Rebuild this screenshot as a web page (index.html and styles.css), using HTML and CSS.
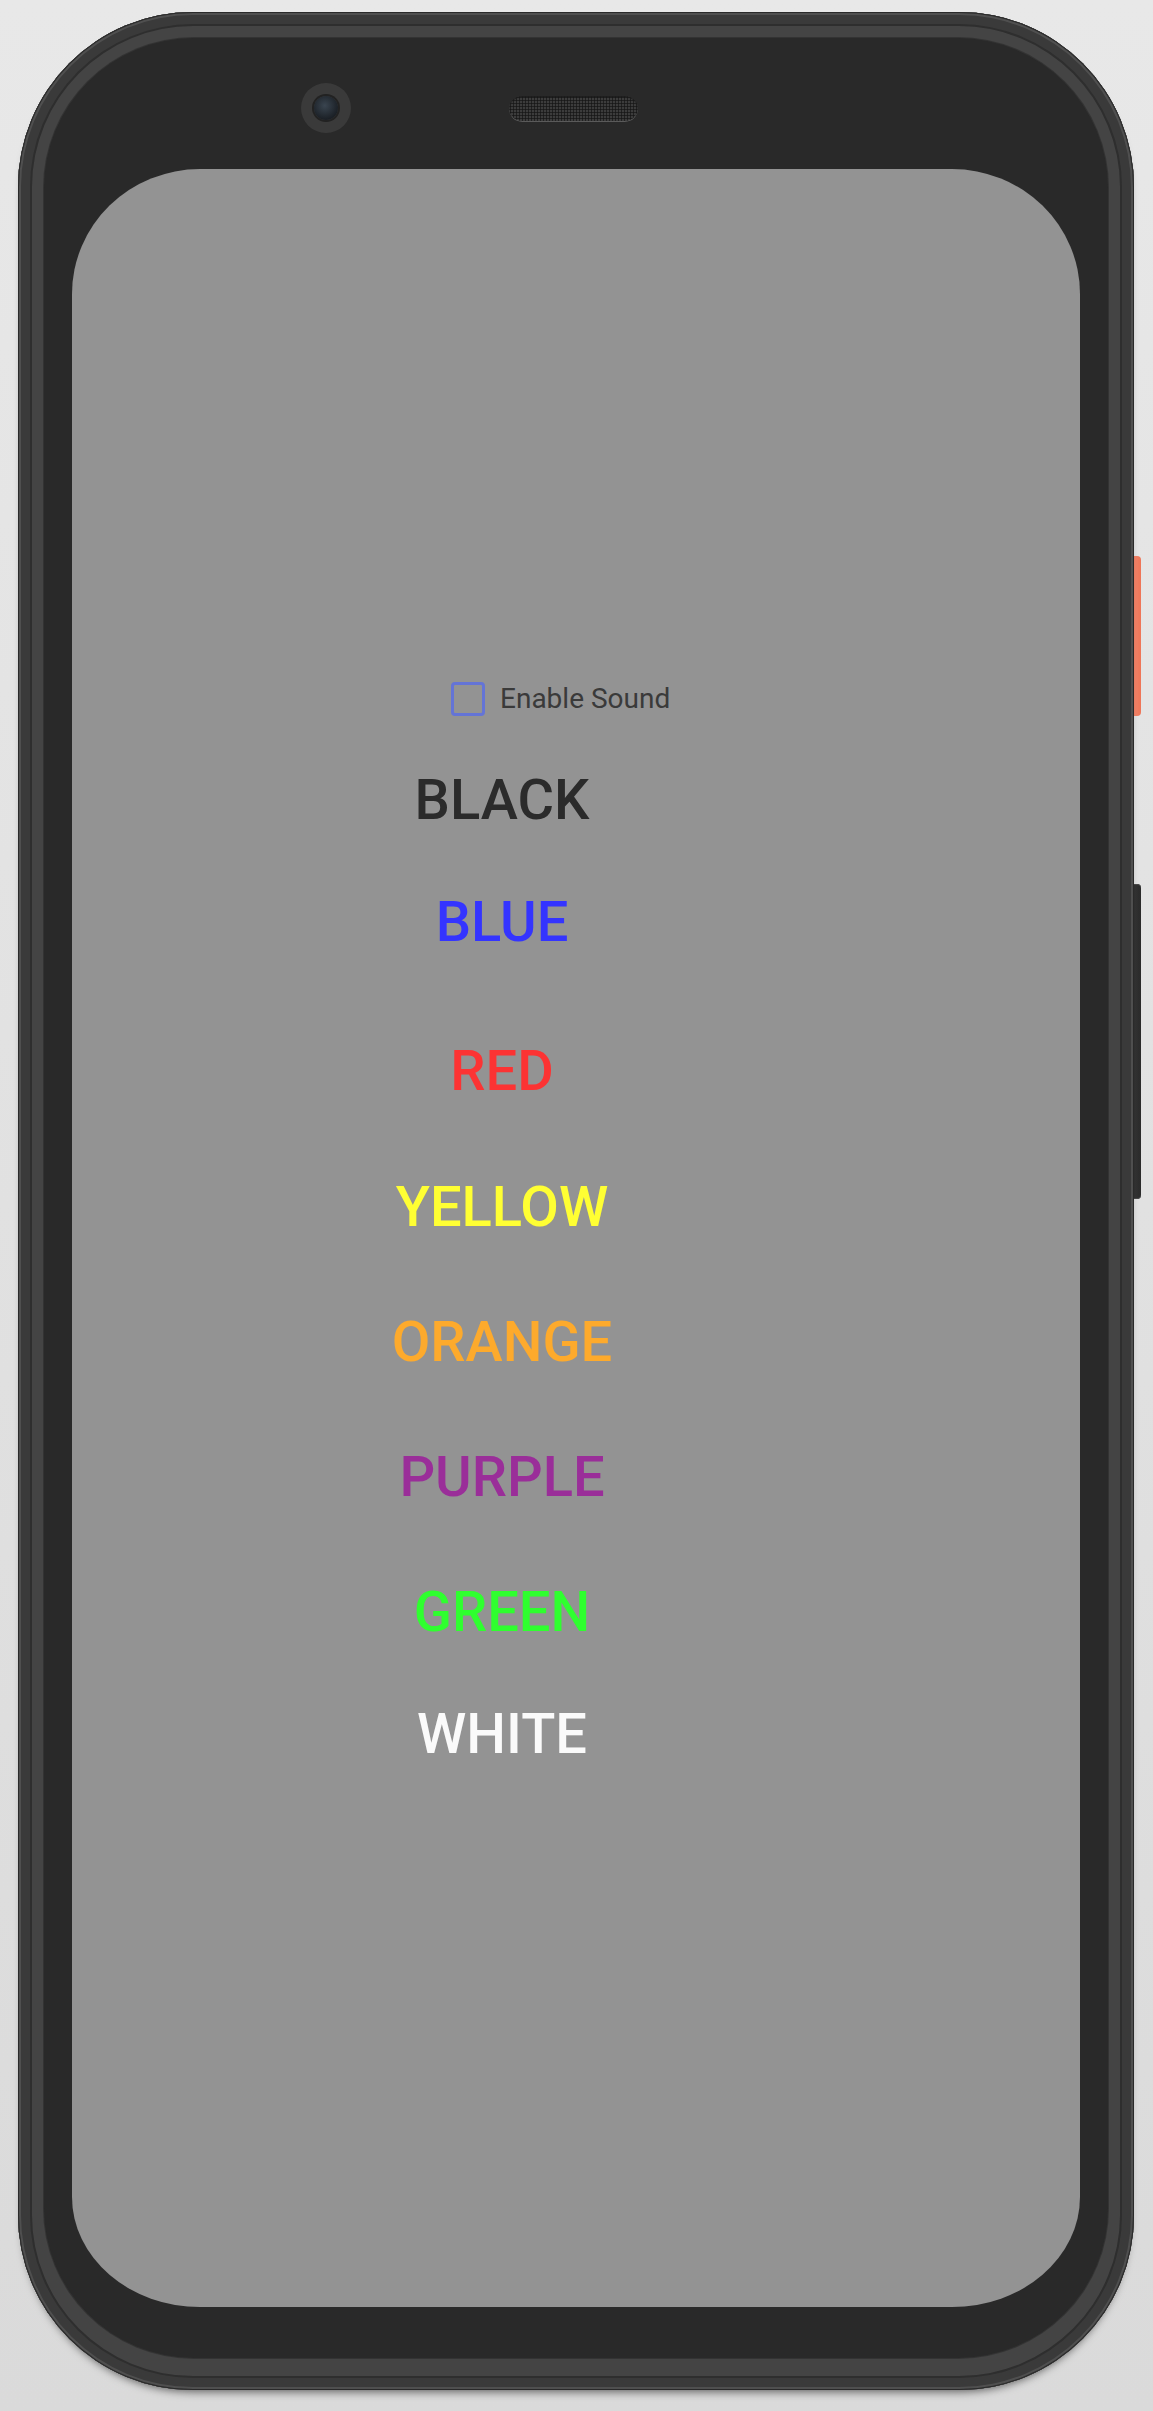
FILE: index.html
```html
<!DOCTYPE html>
<html lang="en">
<head>
    <meta charset="UTF-8">
    <meta name="viewport" content="width=device-width, initial-scale=1.0">
    <title>Color Words</title>
    <link rel="stylesheet" href="styles.css">
</head>
<body>
    <div class="device">
        <span class="side-key key-power"></span>
        <span class="side-key key-volume"></span>
        <div class="phone">
            <div class="bezel">
                <div class="sensors">
                    <span class="camera"><span class="lens"></span></span>
                    <span class="speaker"></span>
                </div>
                <div class="screen">
                    <label class="sound-toggle">
                        <input type="checkbox" id="sound">
                        <span class="box"></span>
                        <span class="sound-label">Enable Sound</span>
                    </label>
                    <div class="words">
                        <div class="word word-black">BLACK</div>
                        <div class="word word-blue">BLUE</div>
                        <div class="word word-red">RED</div>
                        <div class="word word-yellow">YELLOW</div>
                        <div class="word word-orange">ORANGE</div>
                        <div class="word word-purple">PURPLE</div>
                        <div class="word word-green">GREEN</div>
                        <div class="word word-white">WHITE</div>
                    </div>
                </div>
            </div>
        </div>
    </div>
</body>
</html>
```

FILE: styles.css
```css
html, body {
    margin: 0;
    padding: 0;
}
body {
    width: 1153px;
    height: 2411px;
    overflow: hidden;
    background: linear-gradient(#e8e8e8, #dadada);
    font-family: Roboto, "Noto Sans", sans-serif;
}
.device {
    position: relative;
    width: 1116px;
    margin: 12px 0 0 18px;
}
.side-key {
    position: absolute;
    left: 1108px;
    width: 15px;
    border-radius: 0 4px 4px 0;
}
.key-power {
    top: 544px;
    height: 160px;
    background: linear-gradient(90deg, #e86a4c, #f58468 60%, #ee7557);
}
.key-volume {
    top: 872px;
    height: 315px;
    background: linear-gradient(90deg, #222, #333 60%, #2a2a2a);
    box-shadow: inset 0 1px 0 #4a4a4a, inset 0 -1px 0 #4a4a4a;
}
.phone {
    position: relative;
    width: 1116px;
    height: 2378px;
    box-sizing: border-box;
    padding: 26px 26px 32px;
    border-radius: 175px;
    background: #444;
    box-shadow:
        inset 0 0 0 1px #2a2a2a,
        inset 0 0 0 3px #4f4f4f,
        inset 0 0 0 12px #3a3a3a,
        inset 0 0 0 14px #2e2e2e,
        0 7px 8px -5px rgba(0, 0, 0, 0.55);
}
.bezel {
    height: 100%;
    box-sizing: border-box;
    padding: 0 28px 51px;
    border-radius: 150px;
    background: #292929;
    box-shadow: 0 0 0 1px #333;
}
.sensors {
    height: 131px;
    box-sizing: border-box;
    display: flex;
    align-items: flex-start;
    padding: 45px 0 0 229px;
    gap: 158px;
}
.camera {
    width: 50px;
    height: 50px;
    border-radius: 50%;
    background: #3a3a3a;
    display: flex;
    align-items: center;
    justify-content: center;
}
.lens {
    width: 24px;
    height: 24px;
    border-radius: 50%;
    background: radial-gradient(circle at 45% 40%, #3a4550, #1b2026 70%);
    box-shadow: 0 0 0 2px #222;
}
/* speaker grille: dotted mesh */
.speaker {
    width: 129px;
    height: 26px;
    margin-top: 13px;
    border-radius: 13px;
    background-color: #3c3c3c;
    background-image: radial-gradient(#181818 0.9px, transparent 1.3px);
    background-size: 3px 3px;
    box-shadow: inset 0 -1px 0 #5a5a5a, inset 0 1px 1px #1c1c1c;
}
.screen {
    height: 2138px;
    box-sizing: border-box;
    padding-top: 512px;
    border-radius: 128px 128px 128px 128px / 125px 125px 110px 110px;
    background: #939393;
}
.sound-toggle {
    display: flex;
    align-items: center;
    margin-left: 379px;
    height: 36px;
}
.sound-toggle input {
    display: none;
}
.box {
    width: 34px;
    height: 34px;
    box-sizing: border-box;
    border: 3.5px solid #6474d6;
    border-radius: 4px;
}
.sound-label {
    margin-left: 15px;
    font-size: 28px;
    line-height: 36px;
    color: #3a3a3a;
}
.words {
    width: 860px;
    margin-top: 50px;
    text-align: center;
}
.word {
    font-size: 56px;
    line-height: 66px;
    font-weight: 500;
}
.word-black {
    color: #2b2b2b;
}
.word-blue {
    color: #3434ff;
    margin-top: 56px;
}
.word-red {
    color: #fc3333;
    margin-top: 83px;
}
.word-yellow {
    color: #ffff33;
    margin-top: 70px;
}
.word-orange {
    color: #fdaa2c;
    margin-top: 69px;
}
.word-purple {
    color: #9a2e99;
    margin-top: 69px;
}
.word-green {
    color: #2fff2f;
    margin-top: 69px;
}
.word-white {
    color: #fafafa;
    margin-top: 56px;
}
```
